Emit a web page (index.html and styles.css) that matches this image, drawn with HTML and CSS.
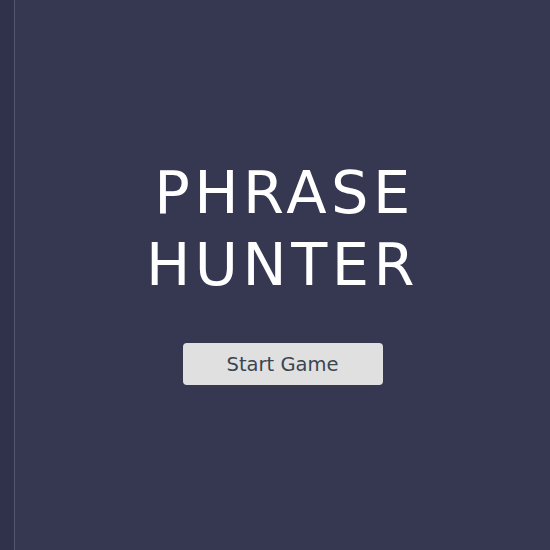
FILE: index.html
```html
<!DOCTYPE html>
<html lang="en">
<head>
<meta charset="utf-8">
<title>Phrase Hunter</title>
<link rel="stylesheet" href="styles.css">
</head>
<body>
<div class="page">
  <div class="edge"></div>
  <main class="overlay">
    <h1 class="title">PHRASE<br>HUNTER</h1>
    <button class="start" type="button">Start Game</button>
  </main>
</div>
</body>
</html>
```

FILE: styles.css
```css
html, body {
  margin: 0;
  padding: 0;
  height: 100%;
}
body {
  background: #30314a;
  font-family: "DejaVu Sans", "Liberation Sans", sans-serif;
}
.page {
  display: flex;
  height: 100%;
}
.edge {
  width: 14px;
  flex: none;
  background: #30314a;
}
.overlay {
  flex: 1;
  border-left: 1px solid #55566e;
  background: #363750;
  display: flex;
  flex-direction: column;
  align-items: center;
  justify-content: center;
  padding-bottom: 8px;
}
.title {
  margin: 0;
  color: #ffffff;
  font-weight: normal;
  font-size: 59px;
  line-height: 72px;
  letter-spacing: 4.5px;
  text-indent: 4px;
  text-align: center;
}
.start {
  margin-top: 42px;
  width: 200px;
  height: 42px;
  border: none;
  border-radius: 4px;
  background: #e0e0e0;
  color: #3b4550;
  font-family: "DejaVu Sans", "Liberation Sans", sans-serif;
  font-size: 19.5px;
  padding: 0;
}
```
